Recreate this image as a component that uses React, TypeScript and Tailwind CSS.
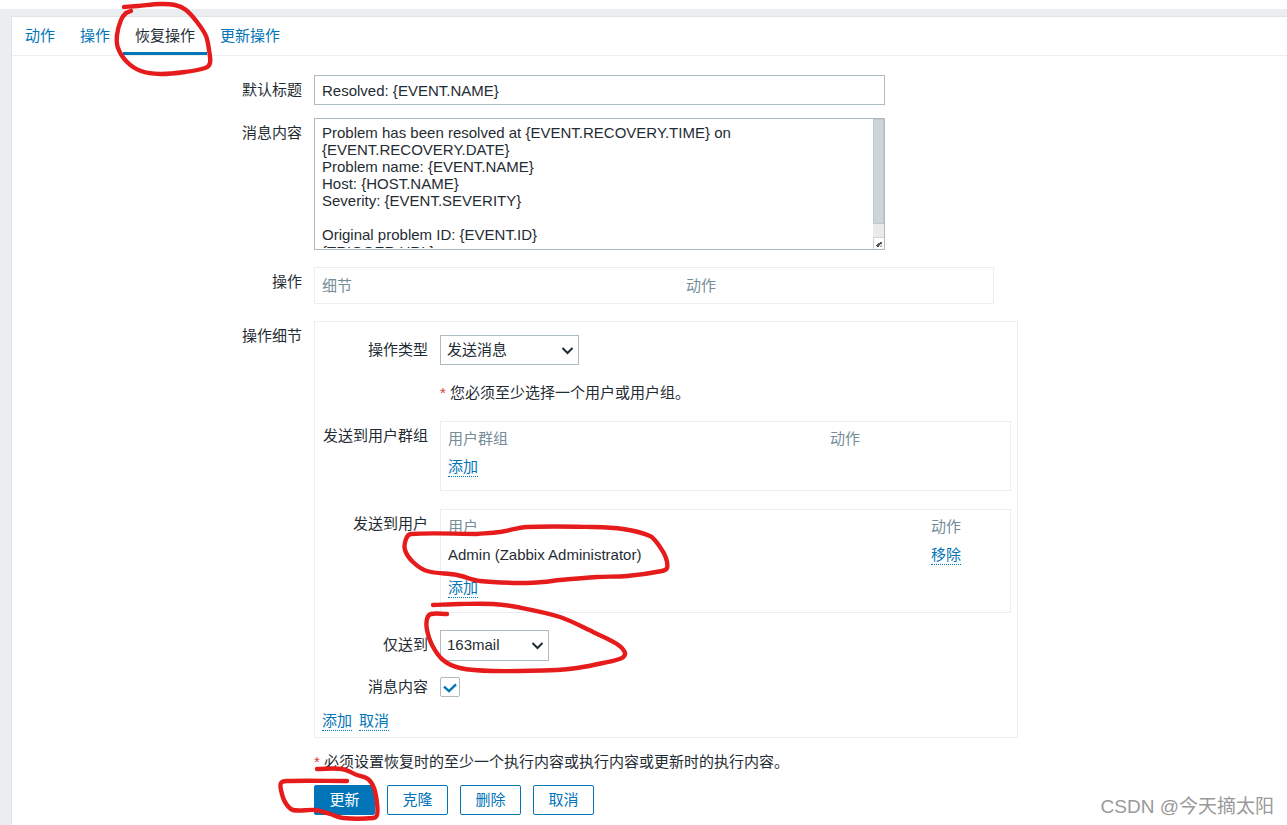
import type { ReactNode, SelectHTMLAttributes } from 'react';

type Point = [number, number];

const MESSAGE = `Problem has been resolved at {EVENT.RECOVERY.TIME} on {EVENT.RECOVERY.DATE}
Problem name: {EVENT.NAME}
Host: {HOST.NAME}
Severity: {EVENT.SEVERITY}

Original problem ID: {EVENT.ID}
{TRIGGER.URL}`;

const TABS = ['动作', '操作', '恢复操作', '更新操作'];
const ACTIVE_TAB = '恢复操作';

// Freehand marker strokes, in page coordinates.
const STROKES: Point[][] = [
  [[124, 7], [138, 6], [160, 4], [175, 5], [186, 10], [197, 22], [206, 36], [209, 50], [210, 63], [205, 68], [185, 72], [160, 74], [141, 71], [127, 62], [118, 48], [117, 35], [121, 20], [126, 13], [131, 11]],
  [[477, 534], [500, 532], [527, 527], [593, 527], [623, 529], [650, 536], [660, 547], [666, 558], [667, 568], [662, 571], [627, 576], [597, 577], [560, 580], [543, 582], [523, 583], [480, 581], [457, 575], [427, 571], [413, 562], [405, 550], [406, 539], [411, 534], [477, 534]],
  [[433, 605], [460, 604], [493, 604], [517, 607], [560, 617], [593, 632], [617, 644], [625, 653], [622, 658], [603, 663], [577, 668], [557, 670], [493, 671], [460, 668], [443, 660], [432, 645], [427, 630], [427, 619], [431, 614], [447, 614]],
  [[317, 769], [342, 769], [357, 775], [368, 779], [374, 788], [377, 803], [377, 815], [373, 818], [343, 818], [330, 814], [315, 810], [293, 810], [285, 802], [281, 790], [281, 783], [287, 781], [347, 781]],
];

// Catmull-Rom spline through the points, written as cubic segments.
function smoothPath(points: Point[]): string {
  let d = `M${points[0][0]} ${points[0][1]}`;
  for (let i = 0; i < points.length - 1; i++) {
    const p0 = points[i - 1] ?? points[i];
    const p1 = points[i];
    const p2 = points[i + 1];
    const p3 = points[i + 2] ?? p2;
    const len = Math.hypot(p2[0] - p1[0], p2[1] - p1[1]);
    const t1 = len / (len + Math.hypot(p1[0] - p0[0], p1[1] - p0[1]) || 1);
    const t2 = len / (len + Math.hypot(p3[0] - p2[0], p3[1] - p2[1]) || 1);
    const c1x = p1[0] + ((p2[0] - p0[0]) * t1) / 3;
    const c1y = p1[1] + ((p2[1] - p0[1]) * t1) / 3;
    const c2x = p2[0] - ((p3[0] - p1[0]) * t2) / 3;
    const c2y = p2[1] - ((p3[1] - p1[1]) * t2) / 3;
    d += `C${c1x} ${c1y} ${c2x} ${c2y} ${p2[0]} ${p2[1]}`;
  }
  return d;
}

function Annotations() {
  return (
    <svg
      className="pointer-events-none absolute left-0 top-0"
      width="700"
      height="825"
      fill="none"
      stroke="#e61c1c"
      strokeWidth="4.4"
      strokeLinecap="round"
      strokeLinejoin="round"
      aria-hidden="true"
    >
      {STROKES.map((s, i) => (
        <path key={i} d={smoothPath(s)} />
      ))}
    </svg>
  );
}

function DottedLink({ children }: { children: ReactNode }) {
  return (
    <a href="#" className="inline-block border-b border-dotted border-[#0275b8] leading-[18px] text-[#0275b8]">
      {children}
    </a>
  );
}

function Select({ children, className, ...rest }: SelectHTMLAttributes<HTMLSelectElement>) {
  return (
    <div className={`relative ${className}`}>
      <select
        {...rest}
        className="h-full w-full appearance-none border border-[#acbbc2] bg-white px-[6px] outline-none"
      >
        {children}
      </select>
      <svg className="pointer-events-none absolute right-[5px] top-[11px]" width="13" height="9" viewBox="0 0 13 9" fill="none" aria-hidden="true">
        <path d="M1.5 2L6.5 7L11.5 2" stroke="#1f2c33" strokeWidth="2" />
      </svg>
    </div>
  );
}

const outerLabel = 'w-[290px] shrink-0 text-right leading-5';
const innerLabel = 'w-[113px] shrink-0 text-right leading-5';
const outlineButton =
  'h-[30px] w-[61px] rounded-[2px] border border-[#0275b8] bg-white text-[#0275b8]';

export default function App() {
  return (
    <div className="relative min-h-screen overflow-hidden bg-[#ebeef0] font-['Liberation_Sans','Noto_Sans_CJK_SC',sans-serif] text-[15px] text-[#1f2c33]">
      <div className="h-[9px] bg-white" />
      <main className="ml-[11px] mt-[7px] min-h-[809px] border-l border-t border-[#dfe4e7] bg-white">
        <nav className="flex gap-px border-b border-[#ebeef0] pl-px">
          {TABS.map((tab) => (
            <a
              key={tab}
              href="#"
              className={
                tab === ACTIVE_TAB
                  ? 'h-[38px] border-b-3 border-[#0275b8] px-3 leading-[38px]'
                  : 'h-[38px] px-3 leading-[38px] text-[#0275b8]'
              }
            >
              {tab}
            </a>
          ))}
        </nav>

        <form className="pt-[19px]" onSubmit={(e) => e.preventDefault()}>
          <div className="flex gap-3">
            <label htmlFor="subject" className={`${outerLabel} pt-[5px]`}>默认标题</label>
            <input
              id="subject"
              type="text"
              defaultValue="Resolved: {EVENT.NAME}"
              className="h-[30px] w-[571px] border border-[#acbbc2] bg-white px-[7px] outline-none"
            />
          </div>

          <div className="mt-[13px] flex gap-3">
            <label htmlFor="message" className={`${outerLabel} pt-[5px]`}>消息内容</label>
            <div className="flex h-[132px] w-[571px] border border-[#acbbc2]">
              <textarea
                id="message"
                defaultValue={MESSAGE}
                className="mb-px min-w-0 flex-1 resize-none overflow-hidden bg-white px-[7px] pt-[5px] leading-[17px] outline-none"
              />
              <div className="flex w-[11px] flex-col bg-[#eaeaea]" aria-hidden="true">
                <div className="h-[105px] border border-[#bccad0] bg-[#ccd5d9]" />
                <div className="flex-1" />
                <div className="h-3 border-l border-t border-[#d4d4d4] bg-white">
                  <svg width="10" height="11" viewBox="0 0 10 11">
                    <path d="M6 4h2v1H6zM4 5h4v1H4zM3 6h3v1H3zM2 7h3v1H2zM3 8h2v1H3z" fill="#555" />
                    <path d="M6 6h1v1H6zM5 7h1v1H5zM7 7h1v2H7zM6 8h1v1H6z" fill="#aaa" />
                  </svg>
                </div>
              </div>
            </div>
          </div>

          <div className="mt-[17px] flex gap-3">
            <div className={`${outerLabel} pt-[5px]`}>操作</div>
            <div className="h-[37px] w-[680px] border border-[#ebeef0] px-[7px]">
              <table className="w-full table-fixed text-left text-[#768d99]">
                <thead>
                  <tr className="h-9">
                    <th className="w-[364px] font-normal">细节</th>
                    <th className="font-normal">动作</th>
                  </tr>
                </thead>
              </table>
            </div>
          </div>

          <div className="mt-[17px] flex gap-3">
            <div className={`${outerLabel} pt-[5px]`}>操作细节</div>
            <div className="w-[704px] border border-[#ebeef0] pb-[6px] pt-[13px]">
              <div className="flex gap-3">
                <label htmlFor="optype" className={`${innerLabel} pt-[5px]`}>操作类型</label>
                <Select id="optype" className="h-[30px] w-[139px]">
                  <option>发送消息</option>
                </Select>
              </div>

              <p className="mt-[18px] pl-[125px] leading-5">
                <span className="text-[#e33734]">*</span> 您必须至少选择一个用户或用户组。
              </p>

              <div className="mt-[18px] flex gap-3">
                <div className={`${innerLabel} pt-[5px]`}>发送到用户群组</div>
                <div className="h-[70px] w-[571px] border border-[#ebeef0] px-[7px] pt-[3px]">
                  <table className="w-full table-fixed text-left">
                    <thead>
                      <tr className="h-7 text-[#768d99]">
                        <th className="w-[382px] font-normal">用户群组</th>
                        <th className="font-normal">动作</th>
                      </tr>
                    </thead>
                    <tbody>
                      <tr className="h-7">
                        <td colSpan={2}><DottedLink>添加</DottedLink></td>
                      </tr>
                    </tbody>
                  </table>
                </div>
              </div>

              <div className="mt-[18px] flex gap-3">
                <div className={`${innerLabel} pt-[5px]`}>发送到用户</div>
                <div className="h-[104px] w-[571px] border border-[#ebeef0] px-[7px] pt-[3px]">
                  <table className="w-full table-fixed text-left">
                    <thead>
                      <tr className="h-7 text-[#768d99]">
                        <th className="w-[483px] font-normal">用户</th>
                        <th className="font-normal">动作</th>
                      </tr>
                    </thead>
                    <tbody>
                      <tr className="h-7">
                        <td>Admin (Zabbix Administrator)</td>
                        <td><DottedLink>移除</DottedLink></td>
                      </tr>
                      <tr className="h-[38px]">
                        <td colSpan={2}><DottedLink>添加</DottedLink></td>
                      </tr>
                    </tbody>
                  </table>
                </div>
              </div>

              <div className="mt-[17px] flex gap-3">
                <label htmlFor="media" className={`${innerLabel} pt-[5px]`}>仅送到</label>
                <Select id="media" className="h-[31px] w-[109px]">
                  <option>163mail</option>
                </Select>
              </div>

              <div className="mt-4 flex items-center gap-3">
                <label htmlFor="default-msg" className={innerLabel}>消息内容</label>
                <div className="relative size-5">
                  <input
                    id="default-msg"
                    type="checkbox"
                    defaultChecked
                    className="peer block size-5 appearance-none rounded-[2px] border border-[#acbbc2] bg-white"
                  />
                  <svg className="pointer-events-none absolute inset-0 hidden peer-checked:block" width="20" height="20" viewBox="0 0 20 20" fill="none" aria-hidden="true">
                    <path d="M4 9.7L9 14.2L16 7.3" stroke="#0275b8" strokeWidth="2.4" />
                  </svg>
                </div>
              </div>

              <div className="mt-[15px] flex gap-[7px] px-[7px]">
                <DottedLink>添加</DottedLink>
                <DottedLink>取消</DottedLink>
              </div>
            </div>
          </div>

          <p className="mt-[14px] pl-[302px] leading-5">
            <span className="text-[#e33734]">*</span> 必须设置恢复时的至少一个执行内容或执行内容或更新时的执行内容。
          </p>
          <div className="mt-[13px] flex gap-3 pl-[302px]">
            <button type="submit" className="h-[30px] w-[61px] rounded-[2px] border border-[#0275b8] bg-[#0275b8] text-white">更新</button>
            <button type="button" className={outlineButton}>克隆</button>
            <button type="button" className={outlineButton}>删除</button>
            <button type="button" className={outlineButton}>取消</button>
          </div>
        </form>
      </main>

      <Annotations />
      <div className="absolute bottom-[6px] right-[13px] text-[19px] leading-6 text-[#999999]">CSDN @今天摘太阳</div>
    </div>
  );
}
